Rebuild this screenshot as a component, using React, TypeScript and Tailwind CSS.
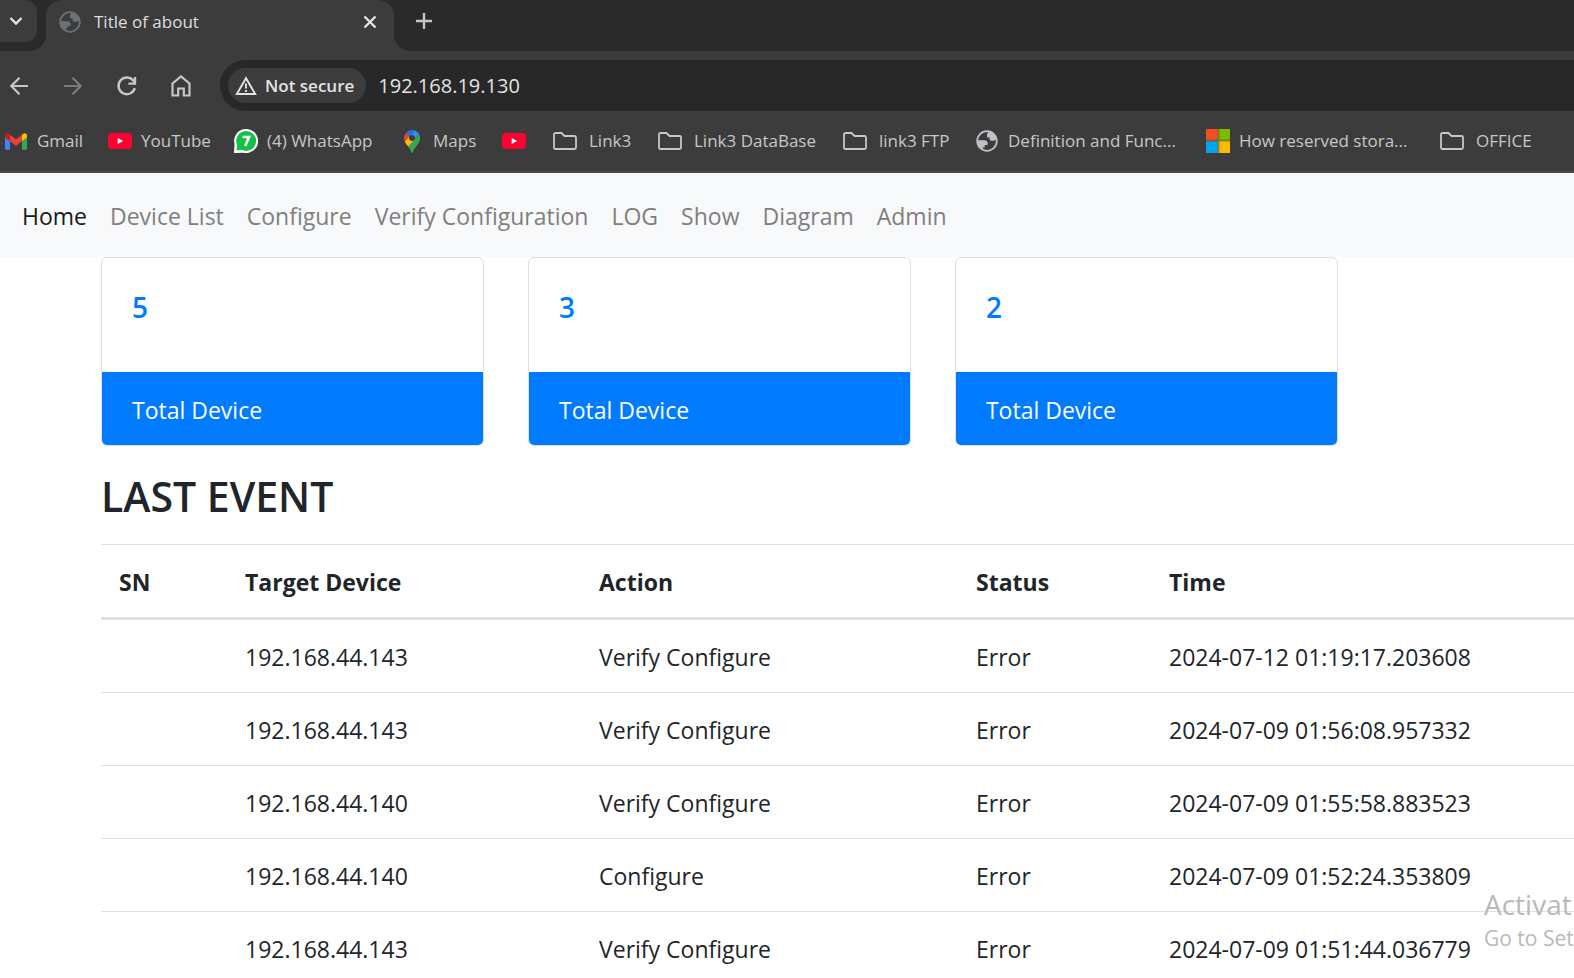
import type { ReactNode } from "react";

function Globe({ className }: { className: string }) {
  return (
    <svg viewBox="0 0 24 24" className={className} aria-hidden="true">
      <circle cx="12" cy="12" r="9.8" fill="none" stroke="currentColor" strokeWidth="1.8" />
      <path
        fill="currentColor"
        d="M13.500 2.600 12 5.600v1.600c0 1 .8 1.400 1.600 1.400h1v1.400c0 1.100.8 1.800 1.900 1.800h1.800c1 0 1.600-.5 2-1l1.500.2C21.500 6.500 17.800 3 13.500 2.600ZM2.400 11.200h6.800c2.200 0 3.600 1.400 3.600 3.200 0 1-.6 1.600-1.600 1.600H9.800v2.200H8v2.600C4.500 19.400 2 15.800 2.400 11.200Z"
      />
    </svg>
  );
}

function GmailIcon() {
  return (
    <svg viewBox="52 42 88 66" className="h-[17px] w-[22px]" aria-hidden="true">
      <path fill="#4285f4" d="M58 108h14V74L52 59v43c0 3.320 2.690 6 6 6" />
      <path fill="#34a853" d="M120 108h14c3.320 0 6-2.690 6-6V59l-20 15" />
      <path fill="#fbbc04" d="M120 48v26l20-15v-8c0-7.420-8.470-11.650-14.400-7.200" />
      <path fill="#ea4335" d="M72 74V48l24 18 24-18v26L96 92" />
      <path fill="#c5221f" d="M52 51v8l20 15V48l-5.600-4.200c-5.940-4.450-14.400-.22-14.400 7.200" />
    </svg>
  );
}

function YouTubeIcon() {
  return (
    <svg viewBox="0 0 24 16" className="h-4 w-6" aria-hidden="true">
      <rect width="24" height="16" rx="3.500" fill="#ff0033" />
      <path d="M9.700 4.900v6.200l5.400-3.100z" fill="#fff" />
    </svg>
  );
}

function WhatsAppIcon() {
  return (
    <svg viewBox="0 0 24 24" className="size-6" aria-hidden="true">
      <path fill="#fff" d="M0 24l.5-9A12 12 0 1 1 9.500 23.700L0 24Z" />
      <circle cx="12.100" cy="12" r="10" fill="#10c143" />
      <path d="M3.200 15.500 2.500 21.400l6-1z" fill="#10c143" />
      <path d="M8.600 8h6.500l-3.900 9" fill="none" stroke="#fff" strokeWidth="2.600" />
    </svg>
  );
}

function MapsIcon() {
  return (
    <svg viewBox="0 0 92.300 132.300" className="h-[23px] w-4" aria-hidden="true">
      <path fill="#1a73e8" d="M60.200 2.200C55.800.8 51 0 46.100 0 32 0 19.300 6.400 10.800 16.500l21.800 18.300L60.200 2.200z" />
      <path fill="#ea4335" d="M10.800 16.500C4.100 24.500 0 34.900 0 46.100c0 8.700 1.700 15.700 4.600 22l28-33.300-21.800-18.300z" />
      <path fill="#4285f4" d="M46.200 28.500c9.800 0 17.700 7.900 17.700 17.700 0 4.300-1.600 8.300-4.200 11.400 0 0 13.900-16.600 27.500-32.700-5.600-10.800-15.300-19-27-22.700L32.600 34.800c3.300-3.800 8.100-6.300 13.600-6.300" />
      <path fill="#fbbc04" d="M46.200 63.800c-9.800 0-17.700-7.900-17.700-17.700 0-4.300 1.500-8.300 4.100-11.300l-28 33.300c4.800 10.600 12.800 19.200 21 29.900l34.100-40.500c-3.300 3.900-8.100 6.300-13.500 6.300" />
      <path fill="#34a853" d="M59.100 109.200c15.400-24.100 33.300-35 33.300-63 0-7.700-1.900-14.900-5.200-21.300L25.600 98c2.600 3.400 5.300 7.300 7.900 11.300 9.400 14.500 6.800 23.100 12.800 23.100s3.400-8.700 12.800-23.200" />
    </svg>
  );
}

function FolderIcon() {
  return (
    <svg viewBox="0 0 24 18" className="h-[18px] w-6" aria-hidden="true">
      <path
        d="M2.500 1h6l3 3h10c.9 0 1.500.6 1.500 1.500v10c0 .9-.6 1.500-1.500 1.500h-19c-.9 0-1.500-.6-1.500-1.500v-13C1 1.600 1.600 1 2.500 1Z"
        fill="none"
        stroke="#c7c7c7"
        strokeWidth="1.800"
      />
    </svg>
  );
}

function MicrosoftIcon() {
  return (
    <svg viewBox="0 0 24 24" className="size-6" aria-hidden="true">
      <path fill="#f25022" d="M0 0h12v12H0z" />
      <path fill="#7fba00" d="M12 0h12v12H12z" />
      <path fill="#00a4ef" d="M0 12h12v12H0z" />
      <path fill="#ffb900" d="M12 12h12v12H12z" />
      <path d="M12.500 0v24M0 11.500h24" stroke="#4a4a20" strokeOpacity=".45" strokeWidth="2" />
    </svg>
  );
}

type Bookmark = { label: string; icon: ReactNode; folder?: boolean };

const bookmarks: Bookmark[] = [
  { label: "Gmail", icon: <GmailIcon /> },
  { label: "YouTube", icon: <YouTubeIcon /> },
  { label: "(4) WhatsApp", icon: <WhatsAppIcon /> },
  { label: "Maps", icon: <MapsIcon /> },
  { label: "", icon: <YouTubeIcon /> },
  { label: "Link3", icon: <FolderIcon />, folder: true },
  { label: "Link3 DataBase", icon: <FolderIcon />, folder: true },
  { label: "link3 FTP", icon: <FolderIcon />, folder: true },
  { label: "Definition and Func...", icon: <Globe className="size-6 text-[#bdc1c6]" /> },
  { label: "How reserved stora...", icon: <MicrosoftIcon /> },
  { label: "OFFICE", icon: <FolderIcon />, folder: true },
];

const links = ["Home", "Device List", "Configure", "Verify Configuration", "LOG", "Show", "Diagram", "Admin"];

const totals = [5, 3, 2];

const events = [
  { device: "192.168.44.143", action: "Verify Configure", time: "2024-07-12 01:19:17.203608" },
  { device: "192.168.44.143", action: "Verify Configure", time: "2024-07-09 01:56:08.957332" },
  { device: "192.168.44.140", action: "Verify Configure", time: "2024-07-09 01:55:58.883523" },
  { device: "192.168.44.140", action: "Configure", time: "2024-07-09 01:52:24.353809" },
  { device: "192.168.44.143", action: "Verify Configure", time: "2024-07-09 01:51:44.036779" },
];

function TabStrip() {
  return (
    <div className="flex h-[51px] bg-[#2a2a2a]">
      <div className="w-[46px] bg-[#3c3c3c]">
        <div className="h-full rounded-br-2xl bg-[#2a2a2a]">
          <button className="flex h-[42px] w-[37px] items-center justify-center rounded-r-xl bg-[#3c3c3c] pr-[6px]" aria-label="Search tabs">
            <svg viewBox="0 0 14 10" className="h-[10px] w-[14px]" aria-hidden="true">
              <path d="m1.500 2 5.500 5.500L12.500 2" fill="none" stroke="#e3e3e3" strokeWidth="2.400" />
            </svg>
          </button>
        </div>
      </div>
      <div className="bg-[#2a2a2a]">
        <div className="flex h-full w-[348px] items-center rounded-t-2xl bg-[#3c3c3c] pr-4 pb-2 pl-3">
          <Globe className="size-6 shrink-0 text-[#6c7177]" />
          <span className="ml-3 flex-1 text-[17px] text-[#dfdfdf]">Title of about</span>
          <button className="flex size-4 items-center justify-center" aria-label="Close tab">
            <svg viewBox="0 0 14 14" className="size-[14px]" aria-hidden="true">
              <path d="m1.500 1.500 11 11m0-11-11 11" stroke="#e3e3e3" strokeWidth="2.400" />
            </svg>
          </button>
        </div>
      </div>
      <div className="flex-1 bg-[#3c3c3c]">
        <div className="h-full rounded-bl-2xl bg-[#2a2a2a] pl-[22px]">
          <button className="flex h-[42px] w-4 items-center" aria-label="New tab">
            <svg viewBox="0 0 16 16" className="size-4" aria-hidden="true">
              <path d="M8 0v16M0 8h16" stroke="#c7c7c7" strokeWidth="2.400" />
            </svg>
          </button>
        </div>
      </div>
    </div>
  );
}

function Toolbar() {
  return (
    <div className="flex items-center pt-[9px]">
      <div className="flex w-[220px] shrink-0 gap-[30px] pl-[7px]">
        <button aria-label="Back">
          <svg viewBox="0 0 24 24" className="size-6" fill="none" stroke="#c7c7c7" strokeWidth="2.200" aria-hidden="true">
            <path d="M21 12H4.500m8-8.200L4.300 12l8.200 8.200" />
          </svg>
        </button>
        <button aria-label="Forward">
          <svg viewBox="0 0 24 24" className="size-6" fill="none" stroke="#7c7c7c" strokeWidth="2.200" aria-hidden="true">
            <path d="M3 12h16.500m-8-8.200 8.200 8.200-8.200 8.200" />
          </svg>
        </button>
        <button aria-label="Reload">
          <svg viewBox="0 0 24 24" className="size-6" fill="none" stroke="#c7c7c7" strokeWidth="2.400" aria-hidden="true">
            <path d="M19.800 14.200A8.300 8.300 0 1 1 18 6.300l2 2.200" />
            <path d="M20 3v6.600h-6.600" />
          </svg>
        </button>
        <button aria-label="Home">
          <svg viewBox="0 0 24 24" className="size-6" fill="none" stroke="#c7c7c7" strokeWidth="2.200" aria-hidden="true">
            <path d="M3.500 21.500V9.500l8.500-7 8.500 7v12h-5.700v-7H9.200v7z" />
          </svg>
        </button>
      </div>
      <div className="flex h-[51px] flex-1 items-center gap-3 rounded-l-full bg-[#282828] pl-2">
        <button className="flex h-[35px] items-center gap-2 rounded-full bg-[#3c3c3c] pr-3 pl-[7px] text-[17px] font-semibold text-[#e3e3e3]">
          <svg viewBox="0 0 22 20" className="h-5 w-[22px]" fill="none" stroke="#e3e3e3" strokeWidth="1.900" aria-hidden="true">
            <path d="M11 2.200 1.800 18h18.400zM11 7.500v5M11 14v2" />
          </svg>
          Not secure
        </button>
        <input
          aria-label="Address"
          defaultValue="192.168.19.130"
          className="min-w-0 flex-1 bg-transparent text-xl text-[#e3e3e3] outline-none"
        />
      </div>
    </div>
  );
}

function Bookmarks() {
  return (
    <nav
      aria-label="Bookmarks"
      className="grid h-[62px] grid-cols-[104px_126px_166px_102px_51px_105px_185px_132px_231px_234px_auto] items-center border-b-2 border-[#4a4848] pl-1 text-[17px] text-[#c7c7c7]"
    >
      {bookmarks.map((item, i) => (
        <a key={i} href="#" aria-label={item.label || "YouTube"} className={item.folder ? "flex items-center gap-3 whitespace-nowrap" : "flex items-center gap-[9px] whitespace-nowrap"}>
          <span className="flex w-6 shrink-0 justify-center">{item.icon}</span>
          {item.label}
        </a>
      ))}
    </nav>
  );
}

export default function App() {
  return (
    <div className="relative flex h-screen flex-col overflow-hidden bg-white font-['Open_Sans','Noto_Sans',sans-serif] text-[#212529]">
      <header className="shrink-0 bg-[#3c3c3c]">
        <TabStrip />
        <Toolbar />
        <Bookmarks />
      </header>
      <nav className="flex shrink-0 gap-[23px] bg-[#f8f9fa] px-[22px] pt-[25px] pb-[23px] text-[23px] leading-9 text-[#7f7f80]">
        {links.map((link, i) => (
          <a key={link} href="#" className={i === 0 ? "text-[#191919]" : "whitespace-nowrap"}>
            {link}
          </a>
        ))}
      </nav>
      <main className="min-h-0 flex-1 overflow-hidden pl-[101px]">
        <section className="grid grid-cols-[repeat(3,26%)] gap-11">
          {totals.map((total) => (
            <article key={total} className="overflow-hidden rounded-md border border-[#dfdfdf]">
              <h5 className="px-[30px] pt-[31px] pb-[47px] text-[28px] leading-9 font-semibold text-[#007bff]">{total}</h5>
              <p className="bg-[#007bff] px-[30px] pt-[20px] pb-[17px] text-[23px] leading-9 text-white">Total Device</p>
            </article>
          ))}
        </section>
        <h3 className="pt-[25px] pb-[23px] text-[41px] leading-[50px] font-semibold">LAST EVENT</h3>
        <table className="w-full table-fixed border-collapse text-left text-[23px] leading-9">
          <colgroup>
            <col className="w-[126px]" />
            <col className="w-[354px]" />
            <col className="w-[377px]" />
            <col className="w-[193px]" />
            <col />
          </colgroup>
          <thead>
            <tr className="border-t border-b-3 border-[#dee2e6]">
              {["SN", "Target Device", "Action", "Status", "Time"].map((head) => (
                <th key={head} className="px-[18px] pt-[19px] pb-[17px] font-bold">
                  {head}
                </th>
              ))}
            </tr>
          </thead>
          <tbody>
            {events.map((event) => (
              <tr key={event.time} className="border-b border-[#dee2e6]">
                <td className="px-[18px] pt-[19px] pb-[17px]" />
                <td className="px-[18px] pt-[19px] pb-[17px]">{event.device}</td>
                <td className="px-[18px] pt-[19px] pb-[17px]">{event.action}</td>
                <td className="px-[18px] pt-[19px] pb-[17px]">Error</td>
                <td className="px-[18px] pt-[19px] pb-[17px] whitespace-nowrap">{event.time}</td>
              </tr>
            ))}
          </tbody>
        </table>
      </main>
      <div className="pointer-events-none absolute right-0 bottom-6 w-[90px] whitespace-nowrap text-[#b9b9b9]">
        <p className="text-[28px] leading-9">Activat</p>
        <p className="text-[21px] leading-8">Go to Set</p>
      </div>
    </div>
  );
}
